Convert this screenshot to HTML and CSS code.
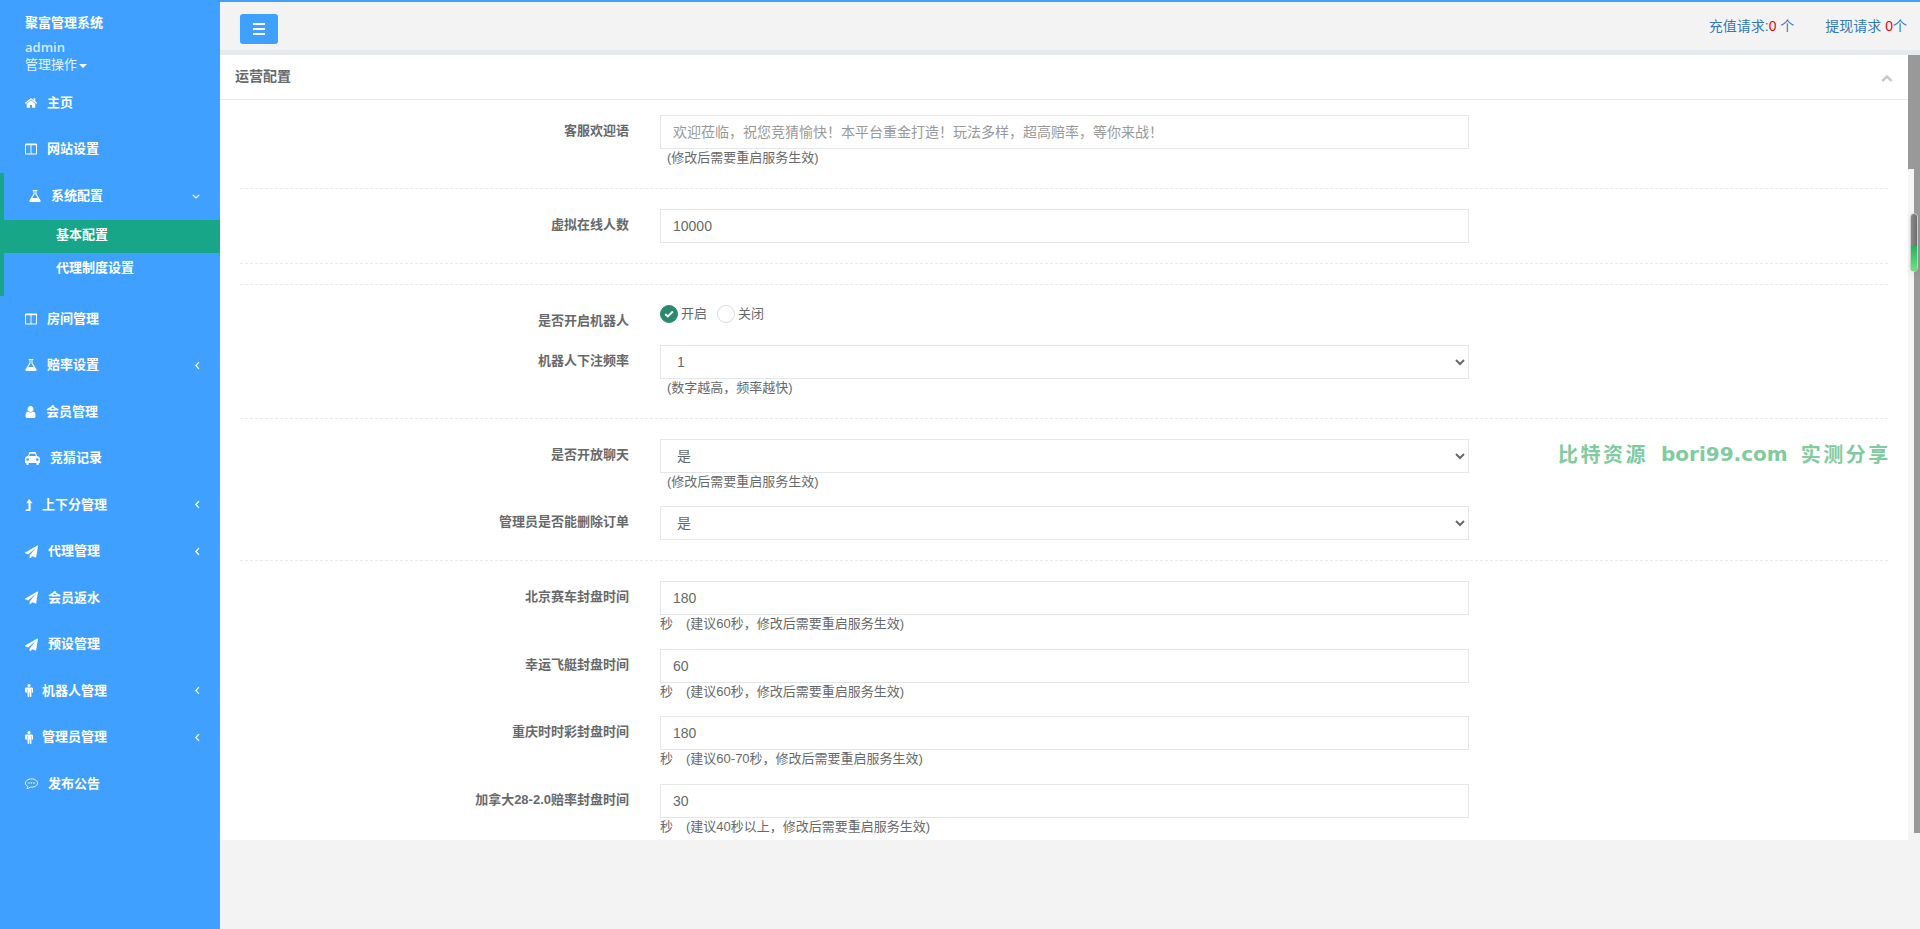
FILE: index.html
```html
<!DOCTYPE html>
<html lang="zh-CN">
<head>
<meta charset="utf-8">
<title>聚富管理系统</title>
<link rel="stylesheet" href="styles.css">
</head>
<body>
<svg class="defs" width="0" height="0" aria-hidden="true">
  <symbol id="home" viewBox="90 250 1610 1290"><path d="M1472 992v480q0 26-19 45t-45 19h-384v-384h-256v384h-384q-26 0-45-19t-19-45v-480q0-1 .5-3t.5-3l575-474 575 474q1 2 1 6zm223-69l-62 74q-8 9-21 11h-3q-13 0-21-7l-692-577-692 577q-12 8-24 7-13-2-21-11l-62-74q-8-10-7-23.500t11-21.500l719-599q32-26 76-26t76 26l244 204v-195q0-14 9-23t23-9h192q14 0 23 9t9 23v408l219 182q10 8 11 21.500t-7 23.500z"/></symbol>
  <symbol id="columns" viewBox="0 128 1664 1536"><path d="M160 1536h608v-1152h-640v1120q0 13 9.500 22.500t22.500 9.500zm1376-32v-1120h-640v1152h608q13 0 22.500-9.500t9.500-22.500zm128-1216v1216q0 66-47 113t-113 47h-1344q-66 0-113-47t-47-113v-1216q0-66 47-113t113-47h1344q66 0 113 47t47 113z"/></symbol>
  <symbol id="flask" viewBox="128 128 1536 1536"><path d="M1591 1448q56 89 21.500 152.500t-140.500 63.500h-1152q-106 0-140.500-63.500t21.500-152.500l503-793v-399h-64q-26 0-45-19t-19-45 19-45 45-19h512q26 0 45 19t19 45-19 45-45 19h-64v399zm-779-725l-272 429h712l-272-429-20-31v-436h-128v436z"/></symbol>
  <symbol id="user" viewBox="256 128 1280 1536"><path d="M1536 1399q0 109-62.500 187t-150.500 78h-854q-88 0-150.500-78t-62.500-187q0-85 8.500-160.500t31.500-152 58.500-131 94-89 134.500-34.500q131 128 313 128t313-128q76 0 134.500 34.500t94 89 58.500 131 31.500 152 8.500 160.500zm-256-887q0 159-112.500 271.500t-271.500 112.500-271.500-112.500-112.500-271.500 112.500-271.500 271.500-112.500 271.500 112.500 112.500 271.500z"/></symbol>
  <symbol id="plane" viewBox="0 0 1792 1664"><path d="M1764 11q33 24 27 64l-256 1536q-5 29-32 45-14 8-31 8-11 0-24-5l-453-185-242 295q-18 23-49 23-13 0-22-4-19-7-30.500-23.500t-11.500-36.500v-349l864-1059-1069 925-395-162q-37-14-40-55-2-40 32-59l1664-960q15-9 32-9 20 0 36 11z"/></symbol>
  <symbol id="level" viewBox="0 0 8 12"><path d="M4 0l3.600 4.300H5.600V11q0 1-1 1H.3l1.200-1.700h2V4.300H1.400z"/></symbol>
  <symbol id="taxi" viewBox="0 0 15 13"><path d="M4.500 0h6L12 4.100q3 .5 3 3V11h-1.200v1.200q0 .8-.8.8h-.8q-.8 0-.8-.8V11H3.600v1.200q0 .8-.8.8H2q-.8 0-.8-.8V11H0V7.100q0-2.600 3-3zM4.900 1.800 4 4.100h7l-.9-2.300zM2.700 6.300a1.300 1.300 0 1 0 0 2.600 1.300 1.300 0 0 0 0-2.600zm9.600 0a1.300 1.300 0 1 0 0 2.600 1.300 1.300 0 0 0 0-2.600z" fill-rule="evenodd"/></symbol>
  <symbol id="male" viewBox="0 0 8 13"><circle cx="4" cy="1.500" r="1.500"/><path d="M1.400 3.400h5.200q1.400 0 1.400 1.400v3.100q0 .8-.6.800t-.6-.8V5h-.4v7.200q0 .8-.8.800t-.8-.8V8.600h-.6v3.600q0 .8-.8.800t-.8-.8V5h-.4v2.900q0 .8-.6.800T0 7.900V4.800q0-1.400 1.400-1.400z"/></symbol>
  <symbol id="comment" viewBox="0 0 14 12"><path d="M7 .5c3.600 0 6.500 2 6.500 4.500S10.600 9.500 7 9.500q-.8 0-1.600-.1-1.300 1.300-3.300 1.800.9-1 1-2.400C1.600 8 .5 6.600.5 5 .5 2.500 3.400.5 7 .5z" fill="none" stroke="currentColor" stroke-width="1"/><circle cx="4.300" cy="5" r=".8"/><circle cx="7" cy="5" r=".8"/><circle cx="9.700" cy="5" r=".8"/></symbol>
  <symbol id="left" viewBox="0 0 6 10"><path d="M4.700 1 1 5l3.700 4" fill="none" stroke="currentColor" stroke-width="1.500"/></symbol>
  <symbol id="down" viewBox="0 0 10 6"><path d="M1 1l4 3.700L9 1" fill="none" stroke="currentColor" stroke-width="1.500"/></symbol>
</svg>

<aside class="sidebar">
  <div class="brand">
    <div class="brand-name">聚富管理系统</div>
    <div class="brand-user">admin</div>
    <div class="brand-role">管理操作<span class="caret"></span></div>
  </div>
  <ul class="menu">
    <li class="item"><svg class="ic" width="12" height="10"><use href="#home"/></svg><span>主页</span></li>
    <li class="item"><svg class="ic" width="12" height="12"><use href="#columns"/></svg><span>网站设置</span></li>
    <li class="group">
      <div class="item item-open"><svg class="ic" width="12" height="12"><use href="#flask"/></svg><span>系统配置</span><svg class="arrow-down" width="8" height="5"><use href="#down"/></svg></div>
      <ul class="submenu">
        <li class="sub sub-active">基本配置</li>
        <li class="sub">代理制度设置</li>
      </ul>
    </li>
    <li class="item"><svg class="ic" width="12" height="12"><use href="#columns"/></svg><span>房间管理</span></li>
    <li class="item"><svg class="ic" width="12" height="12"><use href="#flask"/></svg><span>赔率设置</span><svg class="arrow" width="5" height="9"><use href="#left"/></svg></li>
    <li class="item"><svg class="ic" width="11" height="12"><use href="#user"/></svg><span>会员管理</span></li>
    <li class="item"><svg class="ic" width="15" height="13"><use href="#taxi"/></svg><span>竞猜记录</span></li>
    <li class="item item-narrow"><svg class="ic" width="8" height="12"><use href="#level"/></svg><span>上下分管理</span><svg class="arrow" width="5" height="9"><use href="#left"/></svg></li>
    <li class="item"><svg class="ic" width="13" height="13"><use href="#plane"/></svg><span>代理管理</span><svg class="arrow" width="5" height="9"><use href="#left"/></svg></li>
    <li class="item"><svg class="ic" width="13" height="13"><use href="#plane"/></svg><span>会员返水</span></li>
    <li class="item"><svg class="ic" width="13" height="13"><use href="#plane"/></svg><span>预设管理</span></li>
    <li class="item item-narrow"><svg class="ic" width="8" height="13"><use href="#male"/></svg><span>机器人管理</span><svg class="arrow" width="5" height="9"><use href="#left"/></svg></li>
    <li class="item item-narrow"><svg class="ic" width="8" height="13"><use href="#male"/></svg><span>管理员管理</span><svg class="arrow" width="5" height="9"><use href="#left"/></svg></li>
    <li class="item"><svg class="ic" width="13" height="12"><use href="#comment"/></svg><span>发布公告</span></li>
  </ul>
</aside>

<main class="main">
  <header class="topbar">
    <button class="toggle" type="button" aria-label="menu"><span></span><span></span><span></span></button>
    <div class="requests">
      <a class="req">充值请求:<b>0</b> 个</a>
      <a class="req">提现请求 <b>0</b>个</a>
    </div>
  </header>
  <div class="stage">
    <section class="panel">
      <div class="panel-head">
        <h5>运营配置</h5>
        <svg class="collapse" width="12" height="7" viewBox="0 0 12 7"><path d="M1.200 6 6 1.500 10.800 6" fill="none" stroke="#c9c9c9" stroke-width="2.400"/></svg>
      </div>
      <form class="panel-body">
        <div class="row has-hint">
          <label>客服欢迎语</label>
          <div class="ctl"><input class="field" placeholder="欢迎莅临，祝您竞猜愉快！本平台重金打造！玩法多样，超高赔率，等你来战！"><p class="hint ind">(修改后需要重启服务生效)</p></div>
        </div>
        <hr>
        <div class="row">
          <label>虚拟在线人数</label>
          <div class="ctl"><input class="field" value="10000"></div>
        </div>
        <hr>
        <hr class="tight">
        <div class="row row-radio">
          <label>是否开启机器人</label>
          <div class="ctl radios">
            <span class="radio radio-on"><svg width="10" height="8" viewBox="0 0 10 8"><path d="M1.200 4 3.800 6.500 8.800 1.500" fill="none" stroke="#fff" stroke-width="1.800"/></svg></span><span class="radio-text">开启</span>
            <span class="radio"></span><span class="radio-text">关闭</span>
          </div>
        </div>
        <div class="row has-hint row-freq">
          <label>机器人下注频率</label>
          <div class="ctl"><select class="field"><option>1</option></select><p class="hint ind">(数字越高，频率越快)</p></div>
        </div>
        <hr>
        <div class="row">
          <label>是否开放聊天</label>
          <div class="ctl"><select class="field"><option>是</option></select><p class="hint ind">(修改后需要重启服务生效)</p></div>
        </div>
        <div class="row">
          <label>管理员是否能删除订单</label>
          <div class="ctl"><select class="field"><option>是</option></select></div>
        </div>
        <hr>
        <div class="row">
          <label>北京赛车封盘时间</label>
          <div class="ctl"><input class="field" value="180"><p class="hint">秒<span class="gap"></span>(建议60秒，修改后需要重启服务生效)</p></div>
        </div>
        <div class="row">
          <label>幸运飞艇封盘时间</label>
          <div class="ctl"><input class="field" value="60"><p class="hint">秒<span class="gap"></span>(建议60秒，修改后需要重启服务生效)</p></div>
        </div>
        <div class="row">
          <label>重庆时时彩封盘时间</label>
          <div class="ctl"><input class="field" value="180"><p class="hint">秒<span class="gap"></span>(建议60-70秒，修改后需要重启服务生效)</p></div>
        </div>
        <div class="row">
          <label>加拿大28-2.0赔率封盘时间</label>
          <div class="ctl"><input class="field" value="30"><p class="hint">秒<span class="gap"></span>(建议40秒以上，修改后需要重启服务生效)</p></div>
        </div>
      </form>
      <div class="watermark"><span>比特资源</span><span class="wm-latin">bori99.com</span><span>实测分享</span></div>
    </section>
    <div class="gutter">
      <div class="gutter-top"></div>
      <div class="gutter-rest"><div class="gutter-light"></div><div class="gutter-bar"></div></div>
      <div class="widget"><div class="widget-fill"></div></div>
    </div>
  </div>
</main>
</body>
</html>
```

FILE: styles.css
```css
* { box-sizing: border-box; }
html, body { height: 100%; }
body {
  margin: 0;
  display: flex;
  overflow: hidden;
  background: #f3f3f4;
  color: #676a6c;
  font: 13px/18px "Liberation Sans", "Noto Sans CJK SC", sans-serif;
}
.defs { position: absolute; }
ul { list-style: none; margin: 0; padding: 0; }

/* sidebar */
.sidebar {
  flex: 0 0 220px;
  height: 929px;
  background: #3fa0ff;
  color: #fff;
}
.brand { height: 80px; padding: 14px 0 0 25px; }
.brand-name { font-weight: 700; line-height: 18px; }
.brand-user { margin-top: 6px; color: #d6e8ff; font-family: "Open Sans", sans-serif; font-weight: 600; line-height: 18px; }
.brand-role { line-height: 18px; color: #e6f2ff; }
.caret {
  display: inline-block;
  margin-left: 2px;
  vertical-align: middle;
  border-top: 4px solid #fff;
  border-left: 4px solid transparent;
  border-right: 4px solid transparent;
}
.item {
  display: flex;
  align-items: center;
  height: 46.5px;
  padding: 0 0 1px 25px;
  font-weight: 700;
  gap: 10px;
}
.item-narrow { gap: 9px; }
.ic { fill: #fff; color: #fff; flex: none; }
.arrow, .arrow-down { margin-left: auto; color: #fff; }
.arrow { margin-right: 20px; }
.arrow-down { margin-right: 20px; }
.group {
  border-left: 4px solid #18a689;
  height: 123px;
}
.group .item { height: 47px; }
.sub {
  height: 33px;
  line-height: 30px;
  padding-left: 52px;
  font-weight: 700;
}
.sub-active { background: #18a689; }
.submenu { padding-bottom: 10px; }

/* main */
.main { flex: 1; min-width: 0; display: flex; flex-direction: column; }
.topbar {
  flex: none;
  height: 55px;
  display: flex;
  justify-content: space-between;
  padding: 12px 13px 0 20px;
  border-top: 2px solid #3fa0ff;
  border-bottom: 5px solid #e7eaec;
}
.toggle {
  display: flex;
  flex-direction: column;
  justify-content: center;
  align-items: center;
  gap: 3px;
  width: 38px;
  height: 30px;
  padding: 0;
  border: 0;
  border-radius: 3px;
  background: #3fa0ff;
}
.toggle span { width: 12px; height: 2px; background: #fff; }
.requests { display: flex; gap: 31px; padding-top: 3px; font-size: 14px; }
.req { color: #337ab7; }
.req b { font-weight: 400; color: #f00; }

.stage { flex: none; display: flex; position: relative; }
.panel { width: 1688px; height: 785px; background: #fff; overflow: hidden; position: relative; }
.panel-head {
  display: flex;
  justify-content: space-between;
  align-items: center;
  height: 45px;
  padding: 0 15px 2px;
  border-bottom: 1px solid #e7eaec;
}
.panel-head h5 { margin: 0; font-size: 14px; font-weight: 700; }
.collapse { margin-top: 5px; }
.panel-body { padding: 15px 20px 0; }

.row { display: flex; margin-bottom: 15px; }
.row label {
  flex: 0 0 389px;
  margin-right: 31px;
  padding-top: 7px;
  text-align: right;
  font-weight: 700;
}
.ctl { width: 809px; }
.field {
  display: block;
  width: 100%;
  height: 34px;
  padding: 6px 12px;
  border: 1px solid #e5e6e7;
  border-radius: 0;
  background: #fff;
  color: #676a6c;
  font: inherit;
  font-size: 14px;
  outline: 0;
}
.field::placeholder { color: #999; opacity: 1; }
.hint { margin: 0; line-height: 1.42857; }
.ind { padding-left: 7px; }
.gap { display: inline-block; width: 13px; }
.has-hint { margin-bottom: 0; }
.row-freq { padding-bottom: .43px; }
hr {
  margin: 20px 0;
  border: 0;
  border-top: 1px dashed #e7eaec;
}
.tight { margin-top: 0; }
.row-radio { margin-bottom: 22px; height: 18px; }
.row-radio label { padding-top: 7px; }
.radios { display: flex; align-items: center; height: 18px; }
.radio {
  display: flex;
  align-items: center;
  justify-content: center;
  width: 18px;
  height: 18px;
  border: 1px solid #d9dbdc;
  border-radius: 50%;
  background: #fff;
}
.radio-on { background: #2a8a70; border-color: #2a8a70; }
.radio-text { margin: 0 10px 0 3px; }

.watermark {
  position: absolute;
  left: 1338px;
  top: 387px;
  display: flex;
  gap: 13px;
  color: #80cba0;
  font: 700 20px/24px "Noto Sans CJK SC", sans-serif;
  letter-spacing: 2.5px;
}
.wm-latin { font-family: "DejaVu Sans", sans-serif; font-size: 20px; letter-spacing: 0; }

/* right-hand scroll gutter */
.gutter { flex: 0 0 12px; position: relative; }
.gutter-top { height: 114px; background: #999; }
.gutter-rest { display: flex; height: 664px; }
.gutter-light { flex: 0 0 6px; background: #f5f5f5; }
.gutter-bar { flex: 0 0 6px; background: #999; }
.widget {
  position: absolute;
  left: 2px;
  top: 158px;
  width: 8px;
  height: 59px;
  border: 1px solid #ccc;
  border-radius: 4px;
  background: linear-gradient(90deg, #8a8a8a, #6e6e6e);
  overflow: hidden;
  box-shadow: 0 2px 6px rgba(0, 0, 0, .08);
}
.widget-fill {
  margin-top: 32px;
  height: 26px;
  background: linear-gradient(180deg, #1fb45f, #6fe67f);
}
```
